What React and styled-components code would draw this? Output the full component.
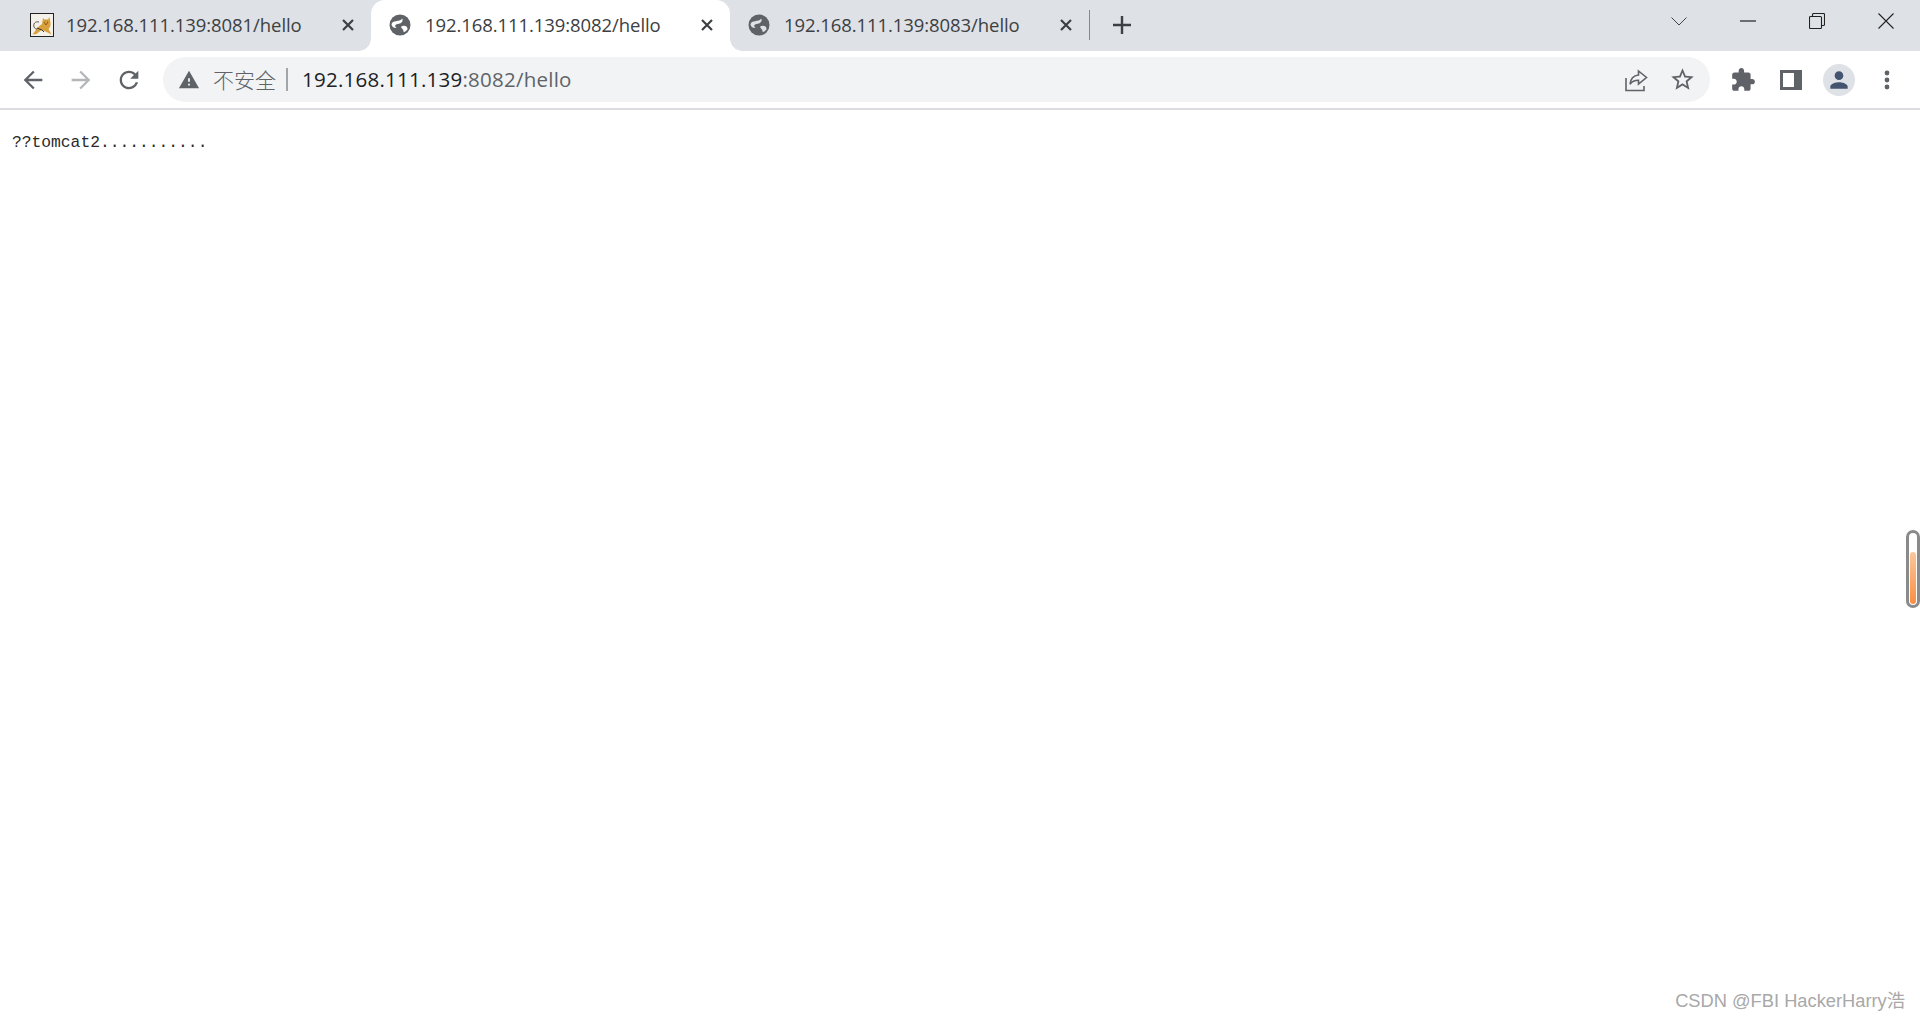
import React from 'react'
import styled, { createGlobalStyle } from 'styled-components'

const GlobalStyle = createGlobalStyle`
  html, body {
    margin: 0;
    padding: 0;
    height: 100%;
    background: #fff;
    overflow: hidden;
  }
`

const Root = styled.div`
  position: relative;
  display: flex;
  flex-direction: column;
  width: 1920px;
  height: 1020px;
  overflow: hidden;
  background: #fff;
`

const TabStrip = styled.div`
  display: flex;
  align-items: stretch;
  height: 51px;
  padding-left: 13px;
  background: #dee1e6;
`

const Tab = styled.div`
  position: relative;
  display: flex;
  align-items: center;
  flex: none;
  width: ${(p) => (p.$first ? 358 : 359)}px;
  padding: 0 13px 1px 17px;
  box-sizing: border-box;
  background: ${(p) => (p.$active ? '#fff' : 'transparent')};
  border-radius: 14px 14px 0 0;
  ${(p) =>
    p.$active &&
    `
    &::before, &::after {
      content: '';
      position: absolute;
      bottom: 0;
      width: 12px;
      height: 12px;
    }
    &::before {
      left: -12px;
      background: radial-gradient(circle at 0 0, #dee1e6 11.5px, #fff 12px);
    }
    &::after {
      right: -12px;
      background: radial-gradient(circle at 100% 0, #dee1e6 11.5px, #fff 12px);
    }
  `}
`

const Favicon = styled.span`
  display: flex;
  flex: none;
  width: 24px;
  height: 24px;
  margin-right: 13px;
`

const TabTitle = styled.span`
  flex: 1;
  margin: -2px 0 0 ${(p) => (p.$first ? -1 : 0)}px;
  font-family: "Open Sans", "Noto Sans", sans-serif;
  font-size: 18.5px;
  letter-spacing: -0.08px;
  color: #3c4043;
  white-space: nowrap;
`

const CloseIcon = styled.svg`
  flex: none;
  width: 12px;
  height: 12px;
  margin-right: 4px;
  stroke: #3c4043;
  stroke-width: 2.2;
`

const Separator = styled.div`
  flex: none;
  width: 1px;
  height: 30px;
  align-self: center;
  margin-bottom: 1px;
  background: #85888c;
`

const NewTab = styled.div`
  display: flex;
  align-items: center;
  justify-content: center;
  flex: none;
  width: 63px;
  padding-bottom: 1px;
`

const WindowControls = styled.div`
  display: flex;
  align-items: flex-start;
  margin-left: auto;
`

const WindowButton = styled.div`
  display: flex;
  align-items: center;
  justify-content: center;
  flex: none;
  width: ${(p) => p.$width}px;
  height: 42px;
`

const Toolbar = styled.div`
  display: flex;
  align-items: center;
  height: 57px;
  padding-left: 9px;
  background: #fff;
  border-bottom: 2px solid #dadce0;
`

const ToolButton = styled.div`
  display: flex;
  align-items: center;
  justify-content: center;
  flex: none;
  width: 48px;
  height: 48px;
`

const ToolIcon = styled.svg`
  width: ${(p) => p.$size || 28}px;
  height: ${(p) => p.$size || 28}px;
  fill: ${(p) => p.$color || '#5f6368'};
`

const Omnibox = styled.div`
  display: flex;
  align-items: center;
  flex: none;
  width: 1547px;
  height: 45px;
  margin: 0 9px 0 10px;
  padding-left: 15px;
  box-sizing: border-box;
  background: #f1f3f4;
  border-radius: 23px;
`

const NotSecure = styled.span`
  margin: -2px 0 0 13px;
  font-family: "Noto Sans CJK SC", sans-serif;
  font-size: 21px;
  font-weight: 300;
  color: #5f6368;
`

const Divider = styled.div`
  flex: none;
  width: 2px;
  height: 23px;
  margin: 0 14px 0 10px;
  background: #a3a6a9;
`

const Url = styled.span`
  margin-top: -2px;
  font-family: "Open Sans", "Noto Sans", sans-serif;
  font-size: 20.5px;
  letter-spacing: 0.24px;
  color: #5f6368;
  white-space: nowrap;
`

const Host = styled.span`
  color: #202124;
`

const OmniboxActions = styled.div`
  display: flex;
  align-items: center;
  gap: 21px;
  margin-left: auto;
  margin-right: 14px;
`

const Avatar = styled.div`
  display: flex;
  align-items: center;
  justify-content: center;
  width: 32px;
  height: 32px;
  border-radius: 50%;
  background: #dee1e6;
`

const Page = styled.pre`
  flex: 1;
  margin: 0;
  padding: 23px 12px;
  font-family: "Liberation Mono", monospace;
  font-size: 16.3px;
  line-height: 19px;
  color: #2a2a2a;
`

const Watermark = styled.div`
  position: absolute;
  right: 15px;
  bottom: 8px;
  font-family: "Liberation Sans", "Noto Sans CJK SC", sans-serif;
  font-size: 18.3px;
  color: #a8a8a8;
  white-space: nowrap;
`

const Thermometer = styled.div`
  position: absolute;
  top: 530px;
  right: 0;
  width: 8px;
  height: 72px;
  border: 3px solid #8a8a8a;
  border-radius: 7px;
  background: #fff;
  &::after {
    content: '';
    position: absolute;
    left: 1px;
    right: 1px;
    top: 19px;
    bottom: 1px;
    border-radius: 3px;
    background: linear-gradient(#fbc79c, #f98f43);
  }
`

const Globe = ({ swoosh }) => (
  <svg width="24" height="24" viewBox="0 0 24 24">
    <circle cx="12" cy="12" r="10.5" fill="#5f6368" />
    <path
      d="M3.500 11.500c.2-2.500 2.500-3 4.500-3.300 2.500-.4 5-.8 6.200-2.700 1 1.500.3 3.800-1.700 4.700-2 1-4.500.6-5.200 2 -.4 1 .2 2 1.500 2.800-2.500.2-5-1-5.300-3.500zM13.200 13.500c1.800-1 4.200-1 5.500.2.800.8.8 2 .8 2.800-1 1.200-2.500 2.300-3.800 2.700-.2-1.300-.3-2.300-1.200-3.200-.8-.8-1.500-1.500-1.300-2.500z"
      fill={swoosh}
    />
  </svg>
)

const TomcatIcon = () => (
  <svg width="24" height="24" viewBox="0 0 24 24">
    <rect x="0.500" y="0.500" width="23" height="23" fill="#f3f1ea" stroke="#222" />
    <path d="M2.500 21.500c3-4 5.500-8.500 9.500-10.500l1-6 1.500 1.500h3.500L19.500 4l1 6c.5 3-1 5-2 6l3 5.500-7-3.500-3-1-5 4z" fill="#d9a13b" />
    <path d="M14 9l2 3 2-3M15 8h.5M17 8h.5" stroke="#8a5a16" fill="none" />
    <path d="M9 9C5 8 3 11 4 14c.6 1.500 2 2 3 2" stroke="#555" fill="none" />
    <path d="M7 15l5 2 2 2" stroke="#333" fill="none" />
  </svg>
)

const Close = () => (
  <CloseIcon viewBox="0 0 12 12">
    <path d="M1 1l10 10M11 1L1 11" />
  </CloseIcon>
)

const tabs = [
  { port: 8081, icon: <TomcatIcon />, first: true },
  { port: 8082, icon: <Globe swoosh="#fff" />, active: true },
  { port: 8083, icon: <Globe swoosh="#dee1e6" /> },
]

const App = () => {
  return (
    <Root>
      <GlobalStyle />
      <TabStrip>
        {tabs.map((t) => (
          <Tab key={t.port} $active={t.active} $first={t.first}>
            <Favicon>{t.icon}</Favicon>
            <TabTitle $first={t.first}>192.168.111.139:{t.port}/hello</TabTitle>
            <Close />
          </Tab>
        ))}
        <Separator />
        <NewTab>
          <svg width="18" height="18" viewBox="0 0 18 18">
            <path d="M9 0v18M0 9h18" stroke="#3c4043" strokeWidth="2.400" />
          </svg>
        </NewTab>
        <WindowControls>
          <WindowButton $width={69}>
            <svg width="16" height="9" viewBox="0 0 16 9" fill="none" stroke="#444">
              <path d="M.5.5L8 8 15.500.5" />
            </svg>
          </WindowButton>
          <WindowButton $width={69}>
            <svg width="16" height="2" viewBox="0 0 16 2">
              <path d="M0 1h16" stroke="#222" strokeWidth="1.200" />
            </svg>
          </WindowButton>
          <WindowButton $width={69}>
            <svg width="16" height="16" viewBox="0 0 16 16" fill="none" stroke="#222" strokeWidth="1.100">
              <rect x="0.500" y="3.500" width="12" height="12" rx="1" />
              <path d="M3.500 3.500V1.500a1 1 0 0 1 1-1h10a1 1 0 0 1 1 1v10a1 1 0 0 1-1 1h-2" />
            </svg>
          </WindowButton>
          <WindowButton $width={69}>
            <svg width="16" height="16" viewBox="0 0 16 16" stroke="#222" strokeWidth="1.100">
              <path d="M.5.5l15 15M15.500.5l-15 15" />
            </svg>
          </WindowButton>
        </WindowControls>
      </TabStrip>

      <Toolbar>
        <ToolButton>
          <ToolIcon viewBox="0 0 24 24">
            <path d="M20 11H7.830l5.590-5.590L12 4l-8 8 8 8 1.410-1.410L7.830 13H20v-2z" />
          </ToolIcon>
        </ToolButton>
        <ToolButton>
          <ToolIcon viewBox="0 0 24 24" $color="#b4b6b9">
            <path d="M12 4l-1.410 1.410L16.170 11H4v2h12.170l-5.580 5.590L12 20l8-8z" />
          </ToolIcon>
        </ToolButton>
        <ToolButton>
          <ToolIcon viewBox="0 0 24 24">
            <path d="M17.650 6.350C16.200 4.900 14.210 4 12 4c-4.420 0-7.990 3.580-7.990 8s3.570 8 7.990 8c3.730 0 6.840-2.550 7.730-6h-2.080c-.82 2.330-3.040 4-5.650 4-3.310 0-6-2.690-6-6s2.690-6 6-6c1.660 0 3.140.69 4.220 1.780L13 11h7V4l-2.350 2.350z" />
          </ToolIcon>
        </ToolButton>

        <Omnibox>
          <ToolIcon viewBox="0 0 24 24" $size={22}>
            <path d="M1 21h22L12 2 1 21zm12-3h-2v-2h2v2zm0-4h-2v-4h2v4z" />
          </ToolIcon>
          <NotSecure>不安全</NotSecure>
          <Divider />
          <Url>
            <Host>192.168.111.139</Host>:8082/hello
          </Url>
          <OmniboxActions>
            <svg width="24" height="24" viewBox="0 0 24 24" fill="none" stroke="#5f6368" strokeWidth="1.600">
              <path d="M2 10v12.500h18V18" />
              <path d="M14.500 3l8 6.500-8 6.500v-3.800c-4 0-6.500 1-8.500 4 .5-5 3-8.500 8.500-9.200z" />
            </svg>
            <ToolIcon viewBox="0 0 24 24" $size={27}>
              <path d="M22 9.240l-7.190-.62L12 2 9.190 8.630 2 9.240l5.460 4.730L5.820 21 12 17.270 18.180 21l-1.630-7.030L22 9.240zM12 15.400l-3.760 2.270 1-4.280-3.320-2.880 4.380-.38L12 6.100l1.710 4.040 4.380.38-3.320 2.880 1 4.280L12 15.400z" />
            </ToolIcon>
          </OmniboxActions>
        </Omnibox>

        <ToolButton>
          <ToolIcon viewBox="0 0 24 24" $size={26}>
            <path d="M20.500 11H19V7c0-1.100-.9-2-2-2h-4V3.500C13 2.120 11.880 1 10.500 1S8 2.120 8 3.500V5H4c-1.100 0-1.990.9-1.990 2v3.800H3.500c1.490 0 2.700 1.210 2.700 2.700s-1.210 2.700-2.700 2.700H2V20c0 1.100.9 2 2 2h3.800v-1.500c0-1.490 1.210-2.700 2.700-2.700 1.490 0 2.700 1.210 2.700 2.700V22H17c1.100 0 2-.9 2-2v-4h1.500c1.380 0 2.500-1.120 2.500-2.500S21.880 11 20.500 11z" />
          </ToolIcon>
        </ToolButton>
        <ToolButton>
          <svg width="22" height="20" viewBox="0 0 22 20">
            <path d="M0 0h22v20H0z M3 3v14h11V3z" fill="#5f6368" fillRule="evenodd" />
          </svg>
        </ToolButton>
        <ToolButton>
          <Avatar>
            <ToolIcon viewBox="0 0 24 24" $size={26} $color="#44546f">
              <path d="M12 12c2.210 0 4-1.790 4-4s-1.790-4-4-4-4 1.790-4 4 1.790 4 4 4zm0 2c-2.670 0-8 1.340-8 4v2h16v-2c0-2.660-5.330-4-8-4z" />
            </ToolIcon>
          </Avatar>
        </ToolButton>
        <ToolButton>
          <svg width="6" height="20" viewBox="0 0 6 20" fill="#5f6368">
            <circle cx="3" cy="3" r="2.400" />
            <circle cx="3" cy="10" r="2.400" />
            <circle cx="3" cy="17" r="2.400" />
          </svg>
        </ToolButton>
      </Toolbar>

      <Page>??tomcat2...........</Page>

      <Thermometer />
      <Watermark>CSDN @FBI HackerHarry浩</Watermark>
    </Root>
  )
}

export default App
